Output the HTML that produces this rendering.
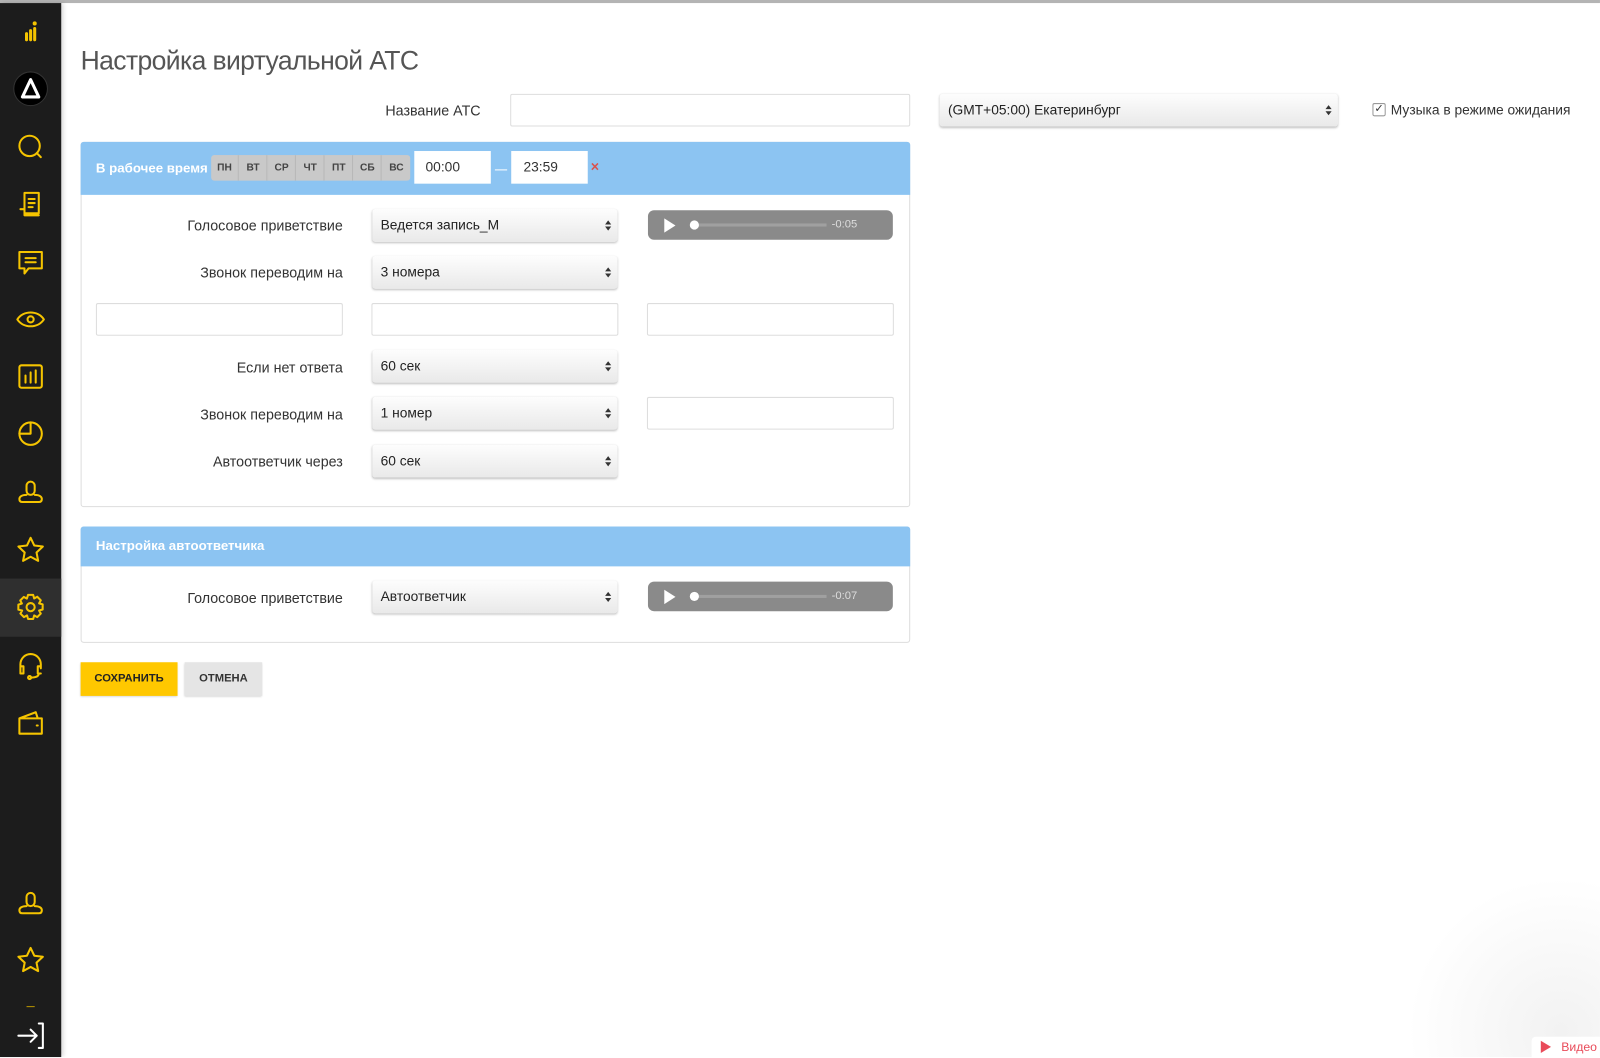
<!DOCTYPE html>
<html><head><meta charset="utf-8"><style>
*{box-sizing:border-box;margin:0;padding:0}
html,body{width:1600px;height:1058px;overflow:hidden}
body{position:relative;background:#fff;font-family:"Liberation Sans","DejaVu Sans",sans-serif;color:#333}
#wrap{position:absolute;left:0;top:0;width:1568px;height:1036px;transform:scale(1.0204);transform-origin:0 0;overflow:hidden}
.a{position:absolute}
#top{left:0;top:0;width:1568px;height:3px;background:#b4b4b4}
#side{left:0;top:3px;width:60px;height:1033px;background:#1c1c1c;box-shadow:2px 0 4px rgba(0,0,0,.15)}
.ic{position:absolute;left:15px;width:30px;height:30px}
.ic svg{width:30px;height:30px;fill:none;stroke:#f5c400;stroke-width:2;stroke-linecap:round;stroke-linejoin:round}
.lbl{font-size:14px;color:#333;text-align:right;white-space:nowrap}
.inp{border:1px solid #ddd;background:#fff;border-radius:2px}
.sel{border-radius:3px;background:linear-gradient(#fdfdfd,#e9e9e9);box-shadow:0 1px 2px rgba(0,0,0,.25);font-size:13.5px;color:#222;padding-left:8px;line-height:32px}
.sel:after{content:"";position:absolute;right:6px;top:11px;width:0;height:0;border-left:3px solid transparent;border-right:3px solid transparent;border-bottom:4px solid #333}
.sel:before{content:"";position:absolute;right:6px;top:17px;width:0;height:0;border-left:3px solid transparent;border-right:3px solid transparent;border-top:4px solid #333}
.panel{border:1px solid #ddd;border-radius:3px;background:#fff}
.hd{background:#8cc4f2;color:#fff;font-weight:bold;font-size:13px}
.pl{background:#8a8a8a;border-radius:6px}
.pl .t{position:absolute;left:45px;top:13px;width:130px;height:3px;background:#a0a0a0}
.pl .k{position:absolute;left:41px;top:10px;width:9px;height:9px;border-radius:50%;background:#fff}
.pl .p{position:absolute;left:16px;top:8px;border-left:11px solid #fff;border-top:7px solid transparent;border-bottom:7px solid transparent}
.pl .s{position:absolute;left:180px;top:0;line-height:29px;font-size:11px;color:#ddd}
.day{position:absolute;top:0;height:25px;width:27px;background:#c9c9c9;font-size:10px;font-weight:bold;color:#444;text-align:center;line-height:25px;border-right:1px solid #b8b8b8}
</style></head><body><div id="wrap">
<div id="top" class="a"></div>
<div id="side" class="a">
 <div class="a" style="left:0;top:564px;width:60px;height:57px;background:#2f2f2f"></div>
 <div class="ic" style="top:14px"><svg viewBox="0 0 30 30"><path d="M11 16v6M15 13v9M19 11v11" stroke-width="3"/><circle cx="19" cy="6" r="1" fill="#f5c400"/></svg></div>
 <div class="a" style="left:13px;top:67px;width:34px;height:34px;border-radius:50%;background:#000;border:1px solid #333"></div>
 <div class="ic" style="top:69px"><svg viewBox="0 0 30 30"><path d="M15 6L7 23H23Z" stroke="#fff" stroke-width="3"/></svg></div>
 <div class="ic" style="top:126px"><svg viewBox="0 0 30 30"><circle cx="14" cy="14" r="10"/><path d="M21 21l4 4"/></svg></div>
 <div class="ic" style="top:182px"><svg viewBox="0 0 30 30"><path d="M9 4h14v20H9zM5 20h4v6h14M13 10h6M13 14h6M13 18h4"/></svg></div>
 <div class="ic" style="top:239px"><svg viewBox="0 0 30 30"><path d="M4 5h22v16H13l-4 5v-5H4zM10 11h10M10 15h10"/></svg></div>
 <div class="ic" style="top:295px"><svg viewBox="0 0 30 30"><path d="M2 15C8 6 22 6 28 15C22 24 8 24 2 15Z"/><circle cx="15" cy="15" r="3"/></svg></div>
 <div class="ic" style="top:351px"><svg viewBox="0 0 30 30"><rect x="4" y="4" width="22" height="22" rx="2"/><path d="M10 14v7M15 11v10M20 9v12"/></svg></div>
 <div class="ic" style="top:407px"><svg viewBox="0 0 30 30"><circle cx="15" cy="15" r="11"/><path d="M15 4v11H4"/></svg></div>
 <div class="ic" style="top:464px"><svg viewBox="0 0 30 30"><path d="M11 9a4 4 0 0 1 8 0v5a4 4 0 0 1-8 0zM11 18c-5 0-7 2-7 4s1 3 3 3h16c2 0 3-1 3-3s-2-4-7-4"/></svg></div>
 <div class="ic" style="top:521px"><svg viewBox="0 0 30 30"><path d="M15 3l3.6 7.6 8.4 1-6.2 5.8 1.6 8.3L15 21.6 7.6 25.7l1.6-8.3L3 11.6l8.4-1z"/></svg></div>
 <div class="ic" style="top:577px"><svg viewBox="0 0 30 30"><path d="M12.5 3h5l1 3.5 3-1.7 3.5 3.5-1.7 3 3.5 1v5l-3.5 1 1.7 3-3.5 3.5-3-1.7-1 3.5h-5l-1-3.5-3 1.7-3.5-3.5 1.7-3L3 17.5v-5l3.5-1-1.7-3 3.5-3.5 3 1.7z"/><circle cx="15" cy="15" r="4"/></svg></div>
 <div class="ic" style="top:634px"><svg viewBox="0 0 30 30"><path d="M5 18v-4a10 10 0 0 1 20 0v4M5 16h3v7H5zM25 16h-3v7h3M23 23c0 3-3 4-8 4"/><circle cx="14" cy="27" r="1.5"/></svg></div>
 <div class="ic" style="top:691px"><svg viewBox="0 0 30 30"><path d="M4 10h22v15H4zM4 10l16-6 2 6M21 17h1"/></svg></div>
 <div class="ic" style="top:867px"><svg viewBox="0 0 30 30"><path d="M11 9a4 4 0 0 1 8 0v5a4 4 0 0 1-8 0zM11 18c-5 0-7 2-7 4s1 3 3 3h16c2 0 3-1 3-3s-2-4-7-4"/></svg></div>
 <div class="ic" style="top:923px"><svg viewBox="0 0 30 30"><path d="M15 3l3.6 7.6 8.4 1-6.2 5.8 1.6 8.3L15 21.6 7.6 25.7l1.6-8.3L3 11.6l8.4-1z"/></svg></div>
 <div class="a" style="left:26px;top:983px;width:8px;height:1px;background:#b89400"></div>
 <div class="ic" style="top:996px"><svg viewBox="0 0 30 30" style="stroke:#fff"><path d="M3 16h18M15 10l6 6-6 6M23 4h4v24h-4"/></svg></div>
</div>

<div class="a" style="left:79px;top:44px;font-size:26px;color:#555;letter-spacing:-0.6px">Настройка виртуальной АТС</div>
<div class="a lbl" style="left:300px;top:100px;width:171px">Название АТС</div>
<div class="a inp" style="left:500px;top:92px;width:392px;height:32px"></div>
<div class="a sel" style="left:921px;top:92px;width:390px;height:32px">(GMT+05:00) Екатеринбург</div>
<div class="a" style="left:1345px;top:101px;width:13px;height:13px;border:1px solid #999;border-radius:2px;font-size:11px;line-height:11px;text-align:center;color:#333">✓</div>
<div class="a" style="left:1363px;top:100px;font-size:13.5px;color:#333">Музыка в режиме ожидания</div>

<div class="a panel" style="left:79px;top:139px;width:813px;height:358px"></div>
<div class="a hd" style="left:79px;top:139px;width:813px;height:52px;border-radius:3px 3px 0 0"></div>
<div class="a" style="left:94px;top:157px;font-size:13px;color:#fff;font-weight:bold">В рабочее время</div>
<div class="a" style="left:207px;top:152px;width:195px;height:25px;border-radius:3px;overflow:hidden;background:#c9c9c9">
 <div class="day" style="left:0">ПН</div><div class="day" style="left:28px">ВТ</div><div class="day" style="left:56px">СР</div><div class="day" style="left:84px">ЧТ</div><div class="day" style="left:112px">ПТ</div><div class="day" style="left:140px">СБ</div><div class="day" style="left:168px;border:none">ВС</div>
</div>
<div class="a" style="left:406px;top:148px;width:75px;height:32px;background:#fff;font-size:13.5px;padding-left:11px;line-height:32px">00:00</div>
<div class="a" style="left:485px;top:166px;width:12px;height:1px;background:#fff"></div>
<div class="a" style="left:501px;top:148px;width:75px;height:32px;background:#fff;font-size:13.5px;padding-left:12px;line-height:32px">23:59</div>
<div class="a" style="left:579px;top:155px;font-size:14px;color:#d9534f;font-weight:bold">×</div>

<div class="a lbl" style="left:100px;top:213px;width:236px">Голосовое приветствие</div>
<div class="a sel" style="left:365px;top:205px;width:240px;height:32px">Ведется запись_М</div>
<div class="a pl" style="left:635px;top:206px;width:240px;height:29px"><div class="p"></div><div class="t"></div><div class="k"></div><div class="s">-0:05</div></div>

<div class="a lbl" style="left:100px;top:259px;width:236px">Звонок переводим на</div>
<div class="a sel" style="left:365px;top:251px;width:240px;height:32px">3 номера</div>

<div class="a inp" style="left:94px;top:297px;width:242px;height:32px"></div>
<div class="a inp" style="left:364px;top:297px;width:242px;height:32px"></div>
<div class="a inp" style="left:634px;top:297px;width:242px;height:32px"></div>

<div class="a lbl" style="left:100px;top:352px;width:236px">Если нет ответа</div>
<div class="a sel" style="left:365px;top:343px;width:240px;height:32px">60 сек</div>
<div class="a lbl" style="left:100px;top:398px;width:236px">Звонок переводим на</div>
<div class="a sel" style="left:365px;top:389px;width:240px;height:32px">1 номер</div>
<div class="a inp" style="left:634px;top:389px;width:242px;height:32px"></div>
<div class="a lbl" style="left:100px;top:444px;width:236px">Автоответчик через</div>
<div class="a sel" style="left:365px;top:436px;width:240px;height:32px">60 сек</div>

<div class="a panel" style="left:79px;top:516px;width:813px;height:114px"></div>
<div class="a hd" style="left:79px;top:516px;width:813px;height:39px;border-radius:3px 3px 0 0;padding:11px 0 0 15px">Настройка автоответчика</div>
<div class="a lbl" style="left:100px;top:578px;width:236px">Голосовое приветствие</div>
<div class="a sel" style="left:365px;top:569px;width:240px;height:32px">Автоответчик</div>
<div class="a pl" style="left:635px;top:570px;width:240px;height:29px"><div class="p"></div><div class="t"></div><div class="k"></div><div class="s">-0:07</div></div>

<div class="a" style="left:79px;top:649px;width:95px;height:33px;background:#ffc800;box-shadow:0 1px 2px rgba(0,0,0,.2);font-size:11px;font-weight:bold;color:#222;text-align:center;line-height:33px">СОХРАНИТЬ</div>
<div class="a" style="left:181px;top:649px;width:76px;height:33px;background:#e5e5e5;box-shadow:0 1px 2px rgba(0,0,0,.2);font-size:11px;font-weight:bold;color:#333;text-align:center;line-height:33px">ОТМЕНА</div>

<div class="a" style="left:1368px;top:836px;width:200px;height:200px;background:radial-gradient(circle at 162px 174px,#f2f2f2,#fff 150px)"></div>
<div class="a" style="left:1501px;top:1016px;width:67px;height:20px;background:#fff;border-radius:4px 0 0 0"></div>
<div class="a" style="left:1510px;top:1020px;border-left:10px solid #e94b5a;border-top:6px solid transparent;border-bottom:6px solid transparent"></div>
<div class="a" style="left:1530px;top:1019px;font-size:12px;line-height:14px;color:#e94b5a">Видео</div>
</div></body></html>
